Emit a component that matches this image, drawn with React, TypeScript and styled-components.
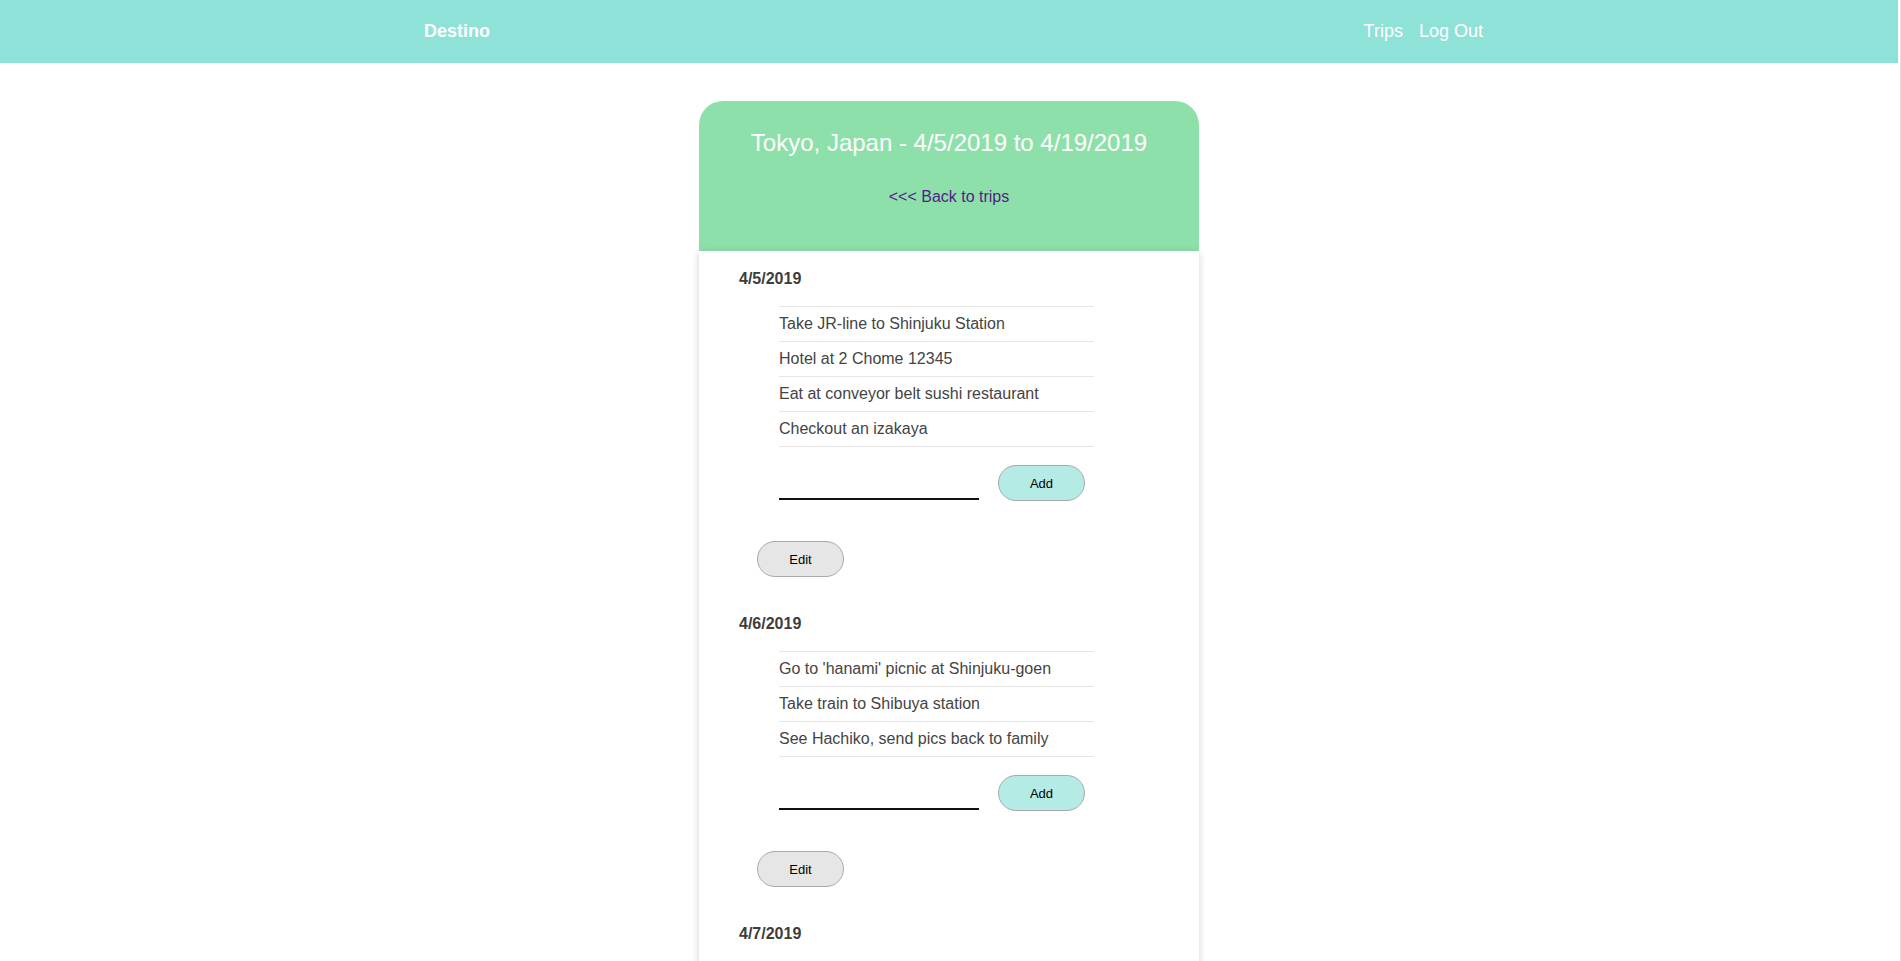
import React from "react";
import styled, { createGlobalStyle } from "styled-components";

const GlobalStyle = createGlobalStyle`
  html, body {
    margin: 0;
    padding: 0;
    background: #fff;
    font-family: "Liberation Sans", Arial, sans-serif;
  }
`;

const Page = styled.div`
  min-height: 100vh;
  padding-right: 2px;
  border-right: 1px solid #e2e2e2;
`;

const NavBar = styled.nav`
  height: 63px;
  background: #8fe2d8;
  display: flex;
  align-items: center;
  justify-content: center;
  padding-left: 9px;
`;

const NavInner = styled.div`
  width: 1059px;
  display: flex;
  justify-content: space-between;
  align-items: center;
`;

const Brand = styled.a`
  color: #fff;
  font-size: 18px;
  font-weight: bold;
  text-decoration: none;
`;

const NavLinks = styled.div`
  display: flex;
  gap: 16px;
`;

const NavLink = styled.a`
  color: #fff;
  font-size: 18px;
  text-decoration: none;
`;

const Card = styled.section`
  width: 500px;
  margin: 38px auto 0;
`;

const CardHeader = styled.header`
  height: 150px;
  background: #8ee0aa;
  border-radius: 24px 24px 0 0;
  box-sizing: border-box;
  padding-top: 28px;
  text-align: center;
`;

const Title = styled.h2`
  margin: 0;
  color: #fff;
  font-size: 24px;
  font-weight: normal;
  line-height: 28px;
`;

const BackLink = styled.a`
  display: inline-block;
  margin-top: 31px;
  color: #551a8b;
  font-size: 16px;
  line-height: 18px;
  text-decoration: none;
`;

const CardBody = styled.div`
  background: #fff;
  padding-top: 19px;
  box-shadow: 0 2px 8px rgba(0, 0, 0, 0.18);
`;

const Day = styled.div`
  padding-bottom: 38px;
`;

const DayTitle = styled.h4`
  margin: 0 0 0 40px;
  font-size: 16px;
  line-height: 18px;
  color: #3d3d3d;
`;

const ItemList = styled.ul`
  list-style: none;
  margin: 18px 0 0 80px;
  padding: 0;
  width: 315px;
  border-top: 1px solid #e6e6e6;
`;

const Item = styled.li`
  height: 34px;
  line-height: 34px;
  border-bottom: 1px solid #e6e6e6;
  font-size: 16px;
  color: #444;
`;

const AddRow = styled.form`
  display: flex;
  align-items: flex-end;
  gap: 19px;
  margin: 18px 0 0 80px;
`;

const AddInput = styled.input`
  width: 200px;
  height: 28px;
  margin-bottom: 1px;
  border: none;
  border-bottom: 2px solid #111;
  outline: none;
  font-family: inherit;
  font-size: 16px;
  padding: 0;
  box-sizing: border-box;
`;

const PillButton = styled.button<{ $tone: "add" | "edit" }>`
  width: 87px;
  height: 36px;
  border-radius: 18px;
  border: 1px solid #a9a9a9;
  background: ${({ $tone }) => ($tone === "add" ? "#b5ebe5" : "#e6e6e6")};
  color: #000;
  font-family: inherit;
  font-size: 13px;
  cursor: pointer;
`;

const EditWrap = styled.div`
  margin: 40px 0 0 58px;
`;

const days = [
  {
    date: "4/5/2019",
    items: [
      "Take JR-line to Shinjuku Station",
      "Hotel at 2 Chome 12345",
      "Eat at conveyor belt sushi restaurant",
      "Checkout an izakaya",
    ],
  },
  {
    date: "4/6/2019",
    items: [
      "Go to 'hanami' picnic at Shinjuku-goen",
      "Take train to Shibuya station",
      "See Hachiko, send pics back to family",
    ],
  },
  {
    date: "4/7/2019",
    items: ["Visit Meiji Shrine", "Walk down Takeshita Street"],
  },
];

export default function App() {
  return (
    <>
      <GlobalStyle />
      <Page>
        <NavBar>
          <NavInner>
            <Brand href="#">Destino</Brand>
            <NavLinks>
              <NavLink href="#">Trips</NavLink>
              <NavLink href="#">Log Out</NavLink>
            </NavLinks>
          </NavInner>
        </NavBar>

        <Card>
          <CardHeader>
            <Title>Tokyo, Japan - 4/5/2019 to 4/19/2019</Title>
            <BackLink href="#">&lt;&lt;&lt; Back to trips</BackLink>
          </CardHeader>
          <CardBody>
            {days.map((d) => (
              <Day key={d.date}>
                <DayTitle>{d.date}</DayTitle>
                <ItemList>
                  {d.items.map((it) => (
                    <Item key={it}>{it}</Item>
                  ))}
                </ItemList>
                <AddRow onSubmit={(e) => e.preventDefault()}>
                  <AddInput type="text" />
                  <PillButton $tone="add" type="submit">
                    Add
                  </PillButton>
                </AddRow>
                <EditWrap>
                  <PillButton $tone="edit" type="button">
                    Edit
                  </PillButton>
                </EditWrap>
              </Day>
            ))}
          </CardBody>
        </Card>
      </Page>
    </>
  );
}
